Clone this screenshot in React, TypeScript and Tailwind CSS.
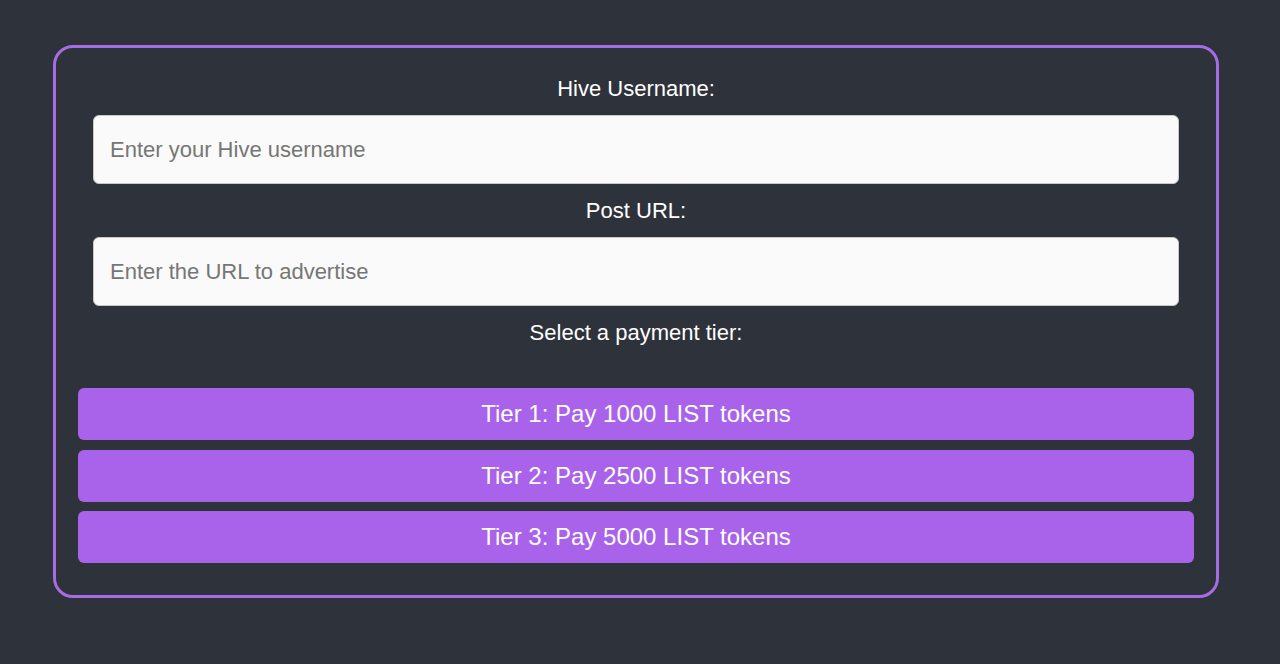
import React from 'react';

const tiers = [
    { id: 1, amount: 1000 },
    { id: 2, amount: 2500 },
    { id: 3, amount: 5000 },
];

export default function App() {
    const [username, setUsername] = React.useState('');
    const [postUrl, setPostUrl] = React.useState('');

    return (
        <div className="min-h-[664px] w-full bg-[#2e323b] pt-[45px] font-['Liberation_Sans',Arial,sans-serif]">
            <div className="ml-[53px] w-[1166px] rounded-[20px] border-[3px] border-[#a66ce2] px-[22px] pt-[28px] pb-[32px] flex flex-col">
                <label htmlFor="hiveUser" className="text-center text-[22px] leading-[26px] text-white">
                    Hive Username:
                </label>
                <input
                    id="hiveUser"
                    value={username}
                    onChange={(e) => setUsername(e.target.value)}
                    placeholder="Enter your Hive username"
                    className="mx-[15px] mt-[13px] h-[69px] rounded-[6px] border border-[#c8c8c8] bg-[#fafafa] px-[16px] text-[22px] text-[#333] placeholder:text-[#767676] outline-none"
                />
                <label htmlFor="postUrl" className="mt-[14px] text-center text-[22px] leading-[26px] text-white">
                    Post URL:
                </label>
                <input
                    id="postUrl"
                    value={postUrl}
                    onChange={(e) => setPostUrl(e.target.value)}
                    placeholder="Enter the URL to advertise"
                    className="mx-[15px] mt-[13px] h-[69px] rounded-[6px] border border-[#c8c8c8] bg-[#fafafa] px-[16px] text-[22px] text-[#333] placeholder:text-[#767676] outline-none"
                />
                <p className="mt-[14px] text-center text-[22px] leading-[26px] text-white">
                    Select a payment tier:
                </p>
                <div className="mt-[42px] flex flex-col gap-[9.5px]">
                    {tiers.map((t) => (
                        <button
                            key={t.id}
                            className="h-[52px] rounded-[6px] bg-[#a963ea] text-[24px] text-white hover:bg-[#9a52dd]"
                        >
                            Tier {t.id}: Pay {t.amount} LIST tokens
                        </button>
                    ))}
                </div>
            </div>
        </div>
    );
}
